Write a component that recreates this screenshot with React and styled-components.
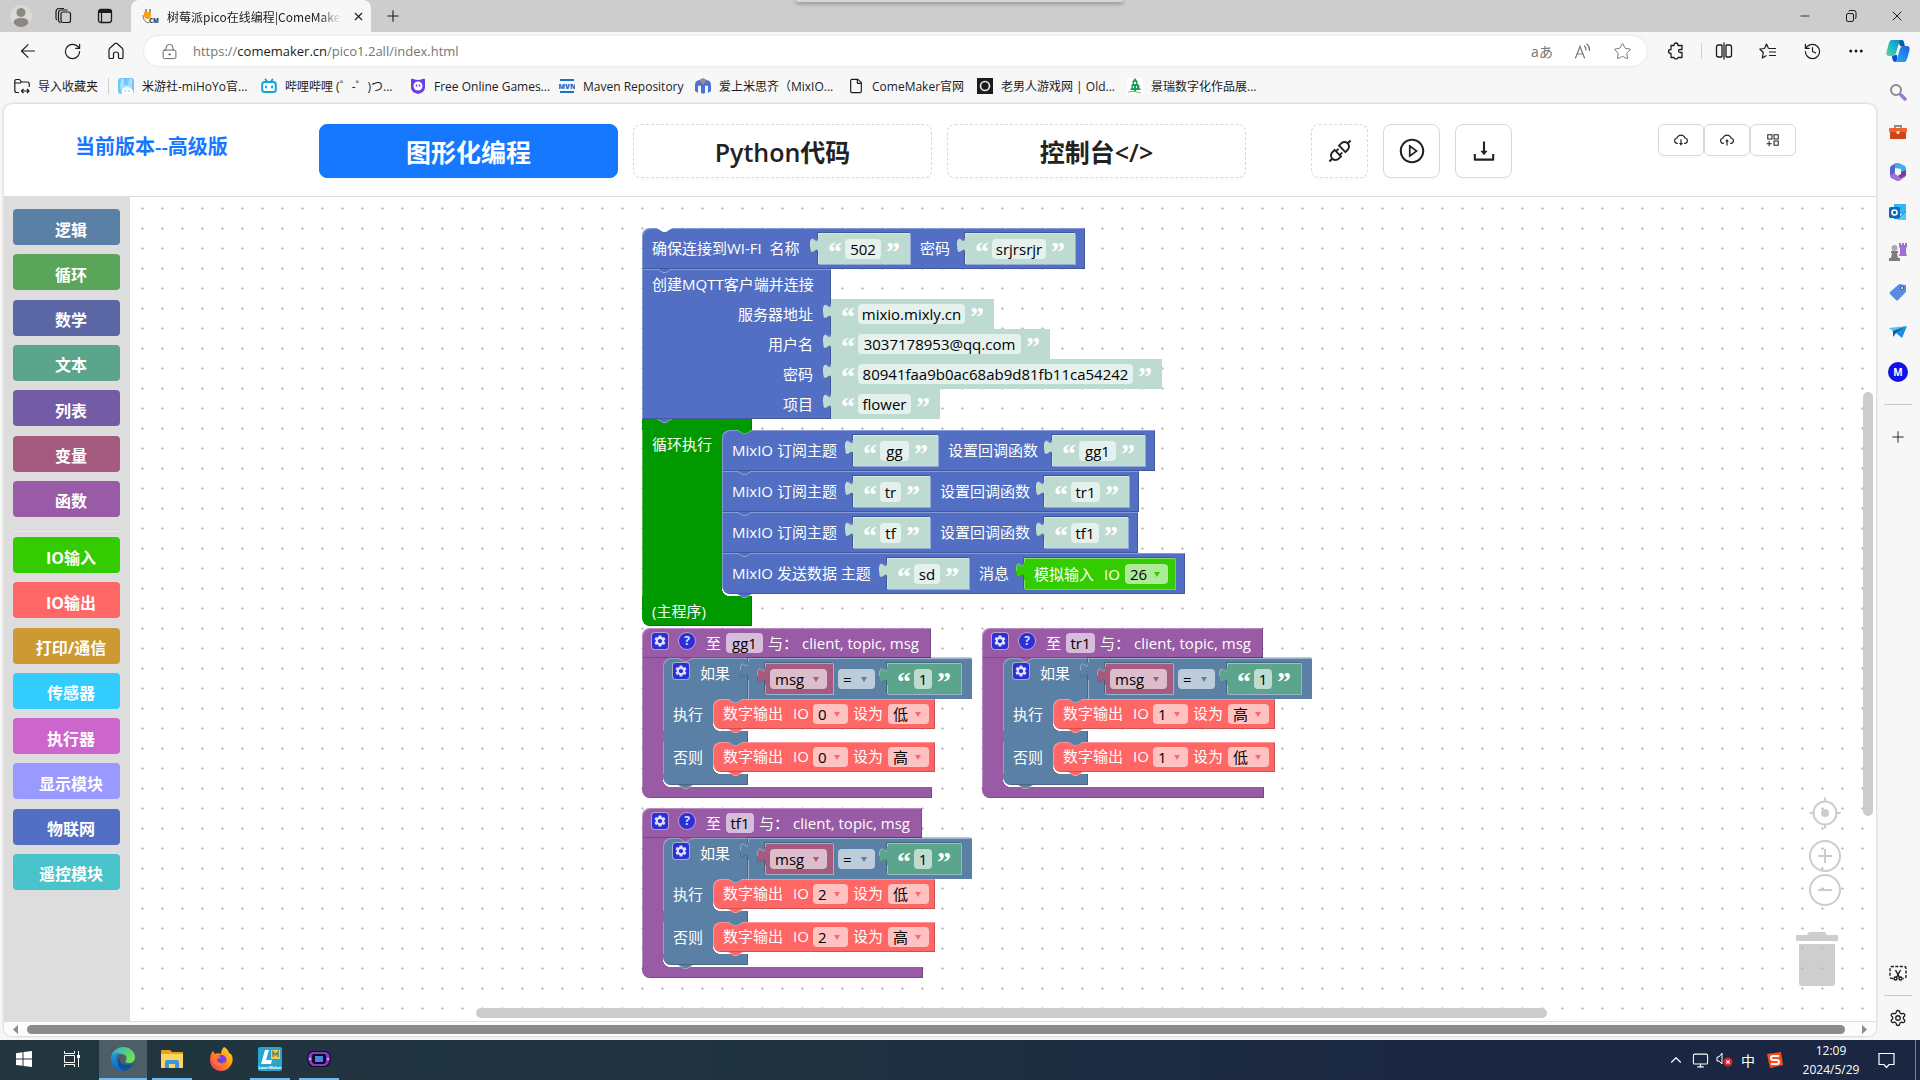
import React, { useState } from 'react';
import styled, { createGlobalStyle, css } from 'styled-components';
import {
    ArrowLeft, RotateCw, LockKeyhole, Star, History, Ellipsis, X, Plus, Minus,
    Settings, File, ChevronUp, Monitor
} from 'lucide-react';
import {
    AiOutlineApi, AiOutlinePlayCircle, AiOutlineDownload, AiOutlineCloudDownload,
    AiOutlineCloudUpload, AiOutlineAppstoreAdd
} from 'react-icons/ai';
import { MdSettings } from 'react-icons/md';

const BLUE = '#526fc3';
const GREEN = '#009900';
const PURPLE = '#995ba5';
const LOGIC = '#5b80a5';
const RED = '#ff6666';
const MINT = '#bedbd1';
const TEXT = '#5ba58c';
const VARIABLE = '#a55b80';

const GlobalStyle = createGlobalStyle`
    * {
        box-sizing: border-box;
    }
    body {
        margin: 0;
        background: #f7f7f7;
        font-family: "Open Sans", "Noto Sans CJK SC", sans-serif;
        color: #1b1b1b;
    }
    button, input, select {
        font-family: inherit;
    }
    svg {
        display: block;
        flex: none;
    }
`

const Shell = styled.div`
    display: flex;
    flex-direction: column;
    min-height: 100vh;
    overflow: hidden;
`

/* ---------- browser ---------- */

const TabStrip = styled.div`
    position: relative;
    display: flex;
    align-items: center;
    height: 32px;
    background: #cdcdcd;
`
const IconButton = styled.button`
    display: flex;
    align-items: center;
    justify-content: center;
    flex: none;
    width: ${props => props.$w || 44}px;
    height: ${props => props.$h || 32}px;
    padding: 0;
    border: 0;
    background: none;
    font-size: 14px;
    color: ${props => props.$color || '#1b1b1b'};
`
const BrowserTab = styled.div`
    display: flex;
    align-items: center;
    gap: 8px;
    width: 240px;
    height: 32px;
    margin-left: 5px;
    padding: 0 4px 0 11px;
    border-radius: 8px 8px 0 0;
    background: #f7f7f7;
    font-family: "Noto Sans CJK SC", sans-serif;
    font-size: 12px;
`
const TabTitle = styled.span`
    flex: 1;
    min-width: 0;
    white-space: nowrap;
    -webkit-mask-image: linear-gradient(90deg, #000 88%, transparent);
    mask-image: linear-gradient(90deg, #000 88%, transparent);
`
const WindowButtons = styled.div`
    display: flex;
    margin-left: auto;
`
const SharePill = styled.div`
    position: absolute;
    top: 0;
    left: 796px;
    width: 327px;
    height: 2px;
    border-radius: 0 0 4px 4px;
    background: #d5d8d5;
    box-shadow: 0 1px 4px rgba(0, 0, 0, 0.6);
`
const Middle = styled.div`
    display: flex;
    flex: 1;
`
const Main = styled.main`
    display: flex;
    flex-direction: column;
    flex: 1;
    min-width: 0;
`
const Toolbar = styled.div`
    display: flex;
    align-items: center;
    height: 38px;
    margin-right: -2px;
    padding-left: 6px;
`
const AddressBar = styled.label`
    display: flex;
    align-items: center;
    flex: 1;
    height: 30px;
    margin: 0 4px 0 6px;
    padding: 0 5px 0 17px;
    border-radius: 15px;
    background: #fff;
    box-shadow: 0 0 3px rgba(0, 0, 0, 0.12);
`
const Url = styled.a`
    flex: 1;
    margin-left: 15px;
    font-size: 13px;
    color: #767676;
    text-decoration: none;
    b {
        font-weight: 400;
        color: #1b1b1b;
    }
`
const VLine = styled.span`
    width: 1px;
    height: 16px;
    background: #cfcfcf;
`
const Bookmarks = styled.nav`
    display: flex;
    align-items: center;
    height: 34px;
    padding: 0 0 2px 14px;
`
const Bookmark = styled.a`
    display: flex;
    align-items: center;
    gap: 8px;
    flex: none;
    width: ${props => props.$w}px;
    font-size: 12px;
    white-space: nowrap;
    color: #1b1b1b;
    text-decoration: none;
`
const Rail = styled.aside`
    display: flex;
    flex-direction: column;
    align-items: center;
    width: 44px;
    padding-bottom: 2px;
`
const RailGroup = styled.div`
    margin-top: ${props => props.$end ? 'auto' : '2px'};
`
const RailLine = styled.hr`
    width: 28px;
    height: 1px;
    margin: ${props => props.$gap || 2}px auto;
    border: 0;
    background: #c8c8c8;
`

/* ---------- page ---------- */

const Card = styled.div`
    display: flex;
    flex-direction: column;
    flex: 1;
    margin: 0 0 4px 4px;
    border-radius: 8px;
    background: #fff;
    overflow: hidden;
    box-shadow: 0 0 3px rgba(0, 0, 0, 0.25);
`
const Header = styled.header`
    display: flex;
    align-items: flex-start;
    height: 93px;
    padding: 20px 80px 0 71px;
    border-bottom: 1px solid #ddd;
`
const Version = styled.div`
    width: 244px;
    font-size: 20px;
    font-weight: 600;
    line-height: 46px;
    color: #1677ff;
`
const ModeTabs = styled.div`
    display: flex;
    gap: 15px;
`
const ModeTab = styled.button`
    width: 299px;
    height: 54px;
    padding: 0;
    border: 1px dashed #d9d9d9;
    border-radius: 8px;
    background: #fff;
    font-size: 25px;
    font-weight: 600;
    color: #222;
    box-shadow: 0 2px 0 rgba(0, 0, 0, 0.02);
    ${props => props.$active && css`
        border: 1px solid #1677ff;
        background: #1677ff;
        color: #fff;
    `}
`
const Actions = styled.div`
    display: flex;
    gap: 15px;
    margin-left: 65px;
`
const ActionButton = styled.button`
    display: flex;
    align-items: center;
    justify-content: center;
    width: ${props => props.$small ? 46 : 57}px;
    height: ${props => props.$small ? 32 : 54}px;
    padding: 0;
    border: 1px ${props => props.$dashed ? 'dashed' : 'solid'} #d9d9d9;
    border-radius: ${props => props.$small ? 6 : 8}px;
    background: #fff;
    color: #222;
    font-size: ${props => props.$small ? 16 : 28}px;
    box-shadow: 0 2px 0 rgba(0, 0, 0, 0.02);
`
const FileActions = styled.div`
    display: flex;
    margin-left: auto;
`
const Editor = styled.div`
    display: flex;
    flex: 1;
`
const Toolbox = styled.nav`
    width: 126px;
    padding: 12px 10px 0 9px;
    background: #ddd;
`
const ToolboxGroup = styled.div`
    display: flex;
    flex-direction: column;
    justify-content: space-between;
    height: ${props => props.$h}px;
`
const ToolboxLine = styled.hr`
    height: 1px;
    margin: 14px 0 5px;
    border: 0;
    background: #e8e8e8;
`
const Category = styled.button`
    height: 36px;
    padding: 5px 0 0 9px;
    border: 0;
    border-radius: 4px;
    background: ${props => props.$color};
    font-size: 16px;
    font-weight: 700;
    line-height: 30px;
    color: #fff;
`
const Canvas = styled.section`
    position: relative;
    flex: 1;
    overflow: hidden;
`
const Dots = styled.svg`
    position: absolute;
    inset: 0;
    width: 100%;
    height: 100%;
`
const CanvasTools = styled.div`
    position: absolute;
    right: 35px;
    bottom: 35px;
    display: flex;
    flex-direction: column;
    align-items: center;
`
const CanvasTool = styled.button`
    padding: 0;
    border: 0;
    background: none;
    margin: 0 0 ${props => props.$gap || 0}px ${props => props.$left || 0}px;
`
const ScrollThumb = styled.div`
    position: absolute;
    border-radius: 5px;
    background: #ccc;
    ${props => props.$vertical
        ? css`top: 195px; right: 3px; width: 10px; height: 424px;`
        : css`left: 346px; right: 329px; bottom: 3px; height: 10px;`}
`
const PageScroll = styled.div`
    display: flex;
    align-items: center;
    gap: 9px;
    height: 15px;
    padding: 0 9px;
    border-top: 1px solid #ddd;
    background: #fcfcfc;
`
const PageThumb = styled.div`
    flex: 1;
    height: 9px;
    margin-right: 8px;
    border-radius: 5px;
    background: #8b8b8b;
`

/* ---------- blocks ---------- */

const bevel = 'box-shadow: inset 1px 1px 0 rgba(255, 255, 255, 0.3), inset -1px -1px 0 rgba(0, 0, 0, 0.2);'

const Stack = styled.div`
    position: absolute;
    left: ${props => props.$x}px;
    top: ${props => props.$y}px;
    display: flex;
    flex-direction: column;
    align-items: flex-start;
    font-size: 15px;
    white-space: nowrap;
    color: #fff;
`
const Label = styled.span`
    flex: none;
    width: ${props => props.$w}px;
    line-height: 20px;
    text-align: ${props => props.$right ? 'right' : 'left'};
`
const StatementBox = styled.div`
    position: relative;
    display: flex;
    align-items: center;
    gap: ${props => props.$gap || 10}px;
    width: max-content;
    height: ${props => props.$h || 41}px;
    padding: 0 ${props => props.$right || 10}px 0 10px;
    border-radius: ${props => props.$first ? 8 : 0}px 0 0 ${props => props.$last ? 8 : 0}px;
    background: ${props => props.$color};
    ${bevel}
    & > ${Label} {
        padding-bottom: 2px;
    }
`
const NotchSvg = styled.svg`
    position: absolute;
    left: 15px;
    ${props => props.$below ? 'top: 100%;' : 'top: 0;'}
    z-index: 1;
`
const ValueBox = styled.div`
    position: relative;
    display: flex;
    align-items: center;
    flex: none;
    height: ${props => props.$h || 31}px;
    padding: ${props => props.$pad || '0 12px 0 10px'};
    background: ${props => props.$color};
    ${props => !props.$flat && css`
        box-shadow: inset 1px 1px 0 rgba(255, 255, 255, 0.4), -1px -1px 0 rgba(0, 0, 0, 0.22), 1px 1px 0 rgba(255, 255, 255, 0.4);
    `}
`
const TabSvg = styled.svg`
    position: absolute;
    left: -8px;
    top: 4px;
`
const Quote = styled.span`
    width: 12px;
    height: 22px;
    margin: ${props => props.$end ? '0 0 0 5px' : '0 5px 0 0'};
    font-family: "Liberation Serif", serif;
    font-size: 28px;
    font-weight: 700;
    line-height: 27px;
    color: #fff;
`
const TextField = styled.input`
    width: ${props => props.$w}px;
    height: 20px;
    padding: 0;
    border: 0;
    border-radius: 4px;
    background: rgba(255, 255, 255, 0.6);
    font-size: 15px;
    line-height: 20px;
    text-align: center;
    color: #000;
`
const SelectWrap = styled.span`
    position: relative;
    flex: none;
    width: ${props => props.$w}px;
    height: 20px;
    border-radius: 4px;
    background: rgba(255, 255, 255, 0.6);
    &::after {
        content: '';
        position: absolute;
        right: 8px;
        top: 8px;
        border: 3px solid transparent;
        border-top: 5px solid ${props => props.$color};
        border-bottom: 0;
        pointer-events: none;
    }
`
const Select = styled.select`
    width: 100%;
    height: 20px;
    padding: 0 0 0 5px;
    border: 0;
    appearance: none;
    background: none;
    font-size: 15px;
    line-height: 20px;
    color: #000;
`
const Arm = styled.div`
    position: relative;
    width: ${props => props.$w}px;
    height: ${props => props.$h || 11}px;
    padding-left: 10px;
    line-height: 31px;
    background: ${props => props.$color};
    border-radius: 0 0 0 ${props => props.$last ? 8 : 0}px;
    box-shadow: inset -1px ${props => props.$last ? '-1px' : 0} 0 rgba(0, 0, 0, 0.2);
`
const Body = styled.div`
    display: flex;
`
const Spine = styled.div`
    width: ${props => props.$w}px;
    padding-left: 10px;
    line-height: ${props => props.$line || 30}px;
    background: ${props => props.$color};
    box-shadow: inset 1px 0 0 rgba(255, 255, 255, 0.3);
`
const Nest = styled.div`
    position: relative;
    padding-bottom: 2px;
    &::before, &::after {
        content: '';
        position: absolute;
        left: 0;
        width: 8px;
        height: 8px;
    }
    &::before {
        top: 0;
        background: ${props => props.$color};
    }
    &::after {
        bottom: 0;
        background: radial-gradient(circle at 100% 0, #fff 8px, ${props => props.$color} 8px);
    }
    & > * {
        z-index: 1;
    }
`
const Column = styled.div`
    position: relative;
`
const ConnectBlock = styled.div`
    position: relative;
    width: 189px;
    padding-left: 10px;
    background: ${BLUE};
    ${bevel}
`
const ConnectTitle = styled.div`
    height: 30px;
    line-height: 31px;
`
const ConnectRow = styled.div`
    display: flex;
    align-items: center;
    gap: 18px;
    width: max-content;
`
const IfHead = styled.div`
    position: relative;
    display: flex;
    width: 85px;
    height: 41px;
    padding: 5px 0 0 10px;
    gap: 11px;
    line-height: 21px;
    border-radius: 8px 0 0 0;
    background: ${LOGIC};
    box-shadow: inset 1px 1px 0 rgba(255, 255, 255, 0.3);
`
const BlockIcon = styled.span`
    display: flex;
    align-items: center;
    justify-content: center;
    flex: none;
    width: 16px;
    height: 16px;
    border-radius: ${props => props.$round ? 8 : 3}px;
    background: #2a2fd8;
    box-shadow: 0 0 0 1px rgba(255, 255, 255, 0.4);
    font-size: 12px;
    font-weight: 700;
    line-height: 16px;
    color: #e0e0ff;
`
const DefHead = styled.div`
    position: relative;
    display: flex;
    align-items: center;
    gap: 5px;
    width: max-content;
    height: 30px;
    padding: 0 12px 0 10px;
    border-radius: 8px 0 0 0;
    background: ${PURPLE};
    ${bevel}
`
const DefIcons = styled.span`
    display: flex;
    gap: 11px;
    margin: 0 6px 5px 0;
`

/* ---------- taskbar ---------- */

const Taskbar = styled.footer`
    display: flex;
    height: 40px;
    background: linear-gradient(90deg, #22363f 0%, #20333f 35%, #1b2742 75%, #1b2742 100%);
    color: #fff;
`
const TaskButton = styled.button`
    display: flex;
    align-items: center;
    justify-content: center;
    width: ${props => props.$w || 40}px;
    margin-right: ${props => props.$gap || 0}px;
    padding: 0;
    border: 0;
    border-bottom: 2px solid ${props => props.$open ? '#76b9ed' : 'transparent'};
    background: ${props => props.$active ? '#4c5e66' : 'none'};
    background-clip: padding-box;
    color: #fff;
`
const Tray = styled.div`
    display: flex;
    align-items: center;
    margin-left: auto;
`
const TrayItem = styled.span`
    display: flex;
    align-items: center;
    justify-content: center;
    width: ${props => props.$w || 24}px;
    font-size: 14px;
`
const Clock = styled.time`
    width: 82px;
    font-size: 12px;
    line-height: 19px;
    text-align: center;
`
const ShowDesktop = styled.span`
    width: 5px;
    height: 40px;
    margin-left: 15px;
    border-left: 1px solid #7a8292;
`

function Notch({ color, below }) {
    return (
        <NotchSvg $below={below} width="15" height="4" viewBox="0 0 15 4">
            <path d="M0 0 L6 4 H9 L15 0 Z" fill={color} />
            <path d="M0 0 L6 3.5 H9 L15 0" fill="none" stroke="rgba(255,255,255,.35)" />
        </NotchSvg>
    )
}

function Value({ color, children, ...rest }) {
    return (
        <ValueBox $color={color} {...rest}>
            <TabSvg width="9" height="18" viewBox="0 0 9 18">
                <path d="M9 1 H8 C8 11 0 -7 0 8.500 S8 6 8 16 H9 Z" fill={color} stroke="rgba(0,0,0,.12)" />
                <path d="M8 1 C8 11 0.500 -7 0.500 8.500" fill="none" stroke="rgba(255,255,255,.45)" />
                <rect x="8" y="0" width="1" height="18" fill={color} />
            </TabSvg>
            {children}
        </ValueBox>
    )
}

function TextValue({ text, w, color = MINT, ...rest }) {
    return (
        <Value color={color} {...rest}>
            <Quote>“</Quote>
            <TextField $w={w} defaultValue={text} aria-label={text} />
            <Quote $end>”</Quote>
        </Value>
    )
}

function Dropdown({ value, options, w, color, label }) {
    return (
        <SelectWrap $w={w} $color={color}>
            <Select defaultValue={value} aria-label={label}>
                {(options || [value]).map(option => <option key={option}>{option}</option>)}
            </Select>
        </SelectWrap>
    )
}

function Subscribe({ topic, topicW, handler, handlerW, first }) {
    return (
        <StatementBox $color={BLUE} $first={first}>
            <Notch color={first ? GREEN : BLUE} />
            <Label $w={111}>MixIO 订阅主题</Label>
            <TextValue text={topic} w={topicW} />
            <Label $w={94}>设置回调函数</Label>
            <TextValue text={handler} w={handlerW} />
        </StatementBox>
    )
}

function DigitalWrite({ pin, level }) {
    return (
        <StatementBox $color={RED} $first $last $h={30} $gap={5} $right={6}>
            <Notch color={LOGIC} />
            <Label $w={65}>数字输出</Label>
            <Label $w={15}>IO</Label>
            <Dropdown value={pin} options={['0', '1', '2']} w={35} color={RED} label="IO" />
            <Label $w={30}>设为</Label>
            <Dropdown value={level} options={['高', '低']} w={41} color={RED} label="设为" />
            <Notch color={RED} below />
        </StatementBox>
    )
}

function Callback({ x, y, name, nameW, pin, then, otherwise }) {
    return (
        <Stack $x={x} $y={y}>
            <DefHead>
                <DefIcons>
                    <BlockIcon><MdSettings size={14} /></BlockIcon>
                    <BlockIcon $round>?</BlockIcon>
                </DefIcons>
                <Label $w={15}>至</Label>
                <TextField $w={nameW} defaultValue={name} aria-label="至" />
                <Label $w={29}>与：</Label>
                <Label $w={117}>client, topic, msg</Label>
            </DefHead>
            <Body>
                <Spine $w={21} $color={PURPLE} />
                <Nest $color={PURPLE}>
                    <Column>
                        <Notch color={PURPLE} />
                        <Body>
                            <IfHead>
                                <BlockIcon><MdSettings size={14} /></BlockIcon>
                                <Label $w={30}>如果</Label>
                            </IfHead>
                            <Value color={LOGIC} $h={41} $pad="0 11px 0 17px">
                                <Value color={VARIABLE} $pad="0 6px 0 5px">
                                    <Dropdown value="msg" w={57} color={VARIABLE} label="msg" />
                                </Value>
                                <ValueBox $flat $color="none" $pad="0 12px 0 5px">
                                    <Dropdown value="=" w={37} color={LOGIC} label="=" />
                                </ValueBox>
                                <TextValue text="1" w={18} color={TEXT} />
                            </Value>
                        </Body>
                        <Body>
                            <Spine $w={50} $color={LOGIC}>执行</Spine>
                            <Nest $color={LOGIC}><DigitalWrite pin={pin} level={then} /></Nest>
                        </Body>
                        <Arm $w={85} $color={LOGIC} />
                        <Body>
                            <Spine $w={50} $color={LOGIC}>否则</Spine>
                            <Nest $color={LOGIC}><DigitalWrite pin={pin} level={otherwise} /></Nest>
                        </Body>
                        <Arm $w={85} $color={LOGIC} $last><Notch color={LOGIC} below /></Arm>
                    </Column>
                </Nest>
            </Body>
            <Arm $w={253 + nameW} $color={PURPLE} $last />
        </Stack>
    )
}

function MainProgram() {
    return (
        <Stack $x={512} $y={31}>
            <StatementBox $color={BLUE} $first>
                <Notch color="#fff" />
                <Label $w={156}>确保连接到WI-FI&nbsp; 名称</Label>
                <TextValue text="502" w={36} />
                <Label $w={35}>密码</Label>
                <TextValue text="srjrsrjr" w={54} />
            </StatementBox>
            <ConnectBlock>
                <Notch color={BLUE} />
                <ConnectTitle>创建MQTT客户端并连接</ConnectTitle>
                <ConnectRow><Label $w={161} $right>服务器地址</Label><TextValue $flat $h={30} text="mixio.mixly.cn" w={107} /></ConnectRow>
                <ConnectRow><Label $w={161} $right>用户名</Label><TextValue $flat $h={30} text="3037178953@qq.com" w={163} /></ConnectRow>
                <ConnectRow><Label $w={161} $right>密码</Label><TextValue $flat $h={30} text="80941faa9b0ac68ab9d81fb11ca54242" w={275} /></ConnectRow>
                <ConnectRow><Label $w={161} $right>项目</Label><TextValue $flat $h={30} text="flower" w={53} /></ConnectRow>
            </ConnectBlock>
            <Arm $w={110} $color={GREEN}><Notch color={BLUE} /></Arm>
            <Body>
                <Spine $w={80} $line={28} $color={GREEN}>循环执行</Spine>
                <Nest $color={GREEN}>
                    <Subscribe first topic="gg" topicW={29} handler="gg1" handlerW={37} />
                    <Subscribe topic="tr" topicW={21} handler="tr1" handlerW={29} />
                    <Subscribe topic="tf" topicW={21} handler="tf1" handlerW={28} />
                    <StatementBox $color={BLUE} $last>
                        <Notch color={BLUE} />
                        <Label $w={145}>MixIO 发送数据 主题</Label>
                        <TextValue text="sd" w={26} />
                        <Label $w={35}>消息</Label>
                        <Value color="#33cc00" $pad="0 7px 0 10px">
                            <Label $w={70}>模拟输入</Label>
                            <Label $w={21}>IO</Label>
                            <Dropdown value="26" w={43} color="#33cc00" label="IO" />
                        </Value>
                        <Notch color={BLUE} below />
                    </StatementBox>
                </Nest>
            </Body>
            <Arm $w={110} $h={30} $color={GREEN} $last>(主程序)</Arm>
        </Stack>
    )
}

const basics = [
    ['逻辑', LOGIC], ['循环', '#5ba55b'], ['数学', '#5b67a5'], ['文本', TEXT],
    ['列表', '#745ba5'], ['变量', VARIABLE], ['函数', PURPLE]
]
const hardware = [
    ['IO输入', '#33cc00'], ['IO输出', RED], ['打印/通信', '#cc9933'], ['传感器', '#33ccff'],
    ['执行器', '#cc66cc'], ['显示模块', '#9999ff'], ['物联网', BLUE], ['遥控模块', '#49c4ca']
]

const bookmarks = [
    { text: '米游社-miHoYo官...', w: 143, icon: <MiyousheIcon /> },
    { text: '哔哩哔哩 (゜-゜)つ...', w: 149, icon: <BiliIcon /> },
    { text: 'Free Online Games...', w: 149, icon: <PokiIcon /> },
    { text: 'Maven Repository', w: 136, icon: <MvnIcon /> },
    { text: '爱上米思齐（MixIO...', w: 153, icon: <MixIcon /> },
    { text: 'ComeMaker官网', w: 129, icon: <File size={16} strokeWidth={1.75} /> },
    { text: '老男人游戏网 | Old...', w: 150, icon: <OldManIcon /> },
    { text: '景瑞数字化作品展...', w: 140, icon: <TreeIcon /> }
]

function MiyousheIcon() {
    return (
        <svg width="16" height="16" viewBox="0 0 16 16">
            <rect width="16" height="16" rx="3" fill="#6fc6fb" />
            <path d="M3 1h3v6h4l1-6h3v8l-2 7H4L2 9z" fill="#a8dffc" />
            <path d="M4 16c-1-4 1-7 5-7s7 3 6 7z" fill="#fff" />
            <path d="M7 12v2M11 12v2" stroke="#6fc6fb" />
        </svg>
    )
}
function BiliIcon() {
    return (
        <svg width="16" height="16" viewBox="0 0 16 16" fill="none" stroke="#12a5da" strokeWidth="2" strokeLinecap="round">
            <path d="M4.500 1.500 6 3.500M11.500 1.500 10 3.500" />
            <rect x="1.200" y="4" width="13.600" height="10" rx="2.500" fill="#fff" />
            <path d="M5 8.500v1M11 8.500v1" />
        </svg>
    )
}
function PokiIcon() {
    return (
        <svg width="16" height="16" viewBox="0 0 16 16">
            <path d="M1 1c3-1 3 1 7 1s4-2 7-1v8c0 4-3 6-7 7-4-1-7-3-7-7z" fill="#6a3de8" />
            <circle cx="8" cy="8" r="4.500" fill="#fff" />
            <path d="M6.500 6.500v2M9.500 6.500v2" stroke="#6a3de8" strokeWidth="1.500" />
        </svg>
    )
}
function MvnIcon() {
    return (
        <svg width="16" height="16" viewBox="0 0 16 16">
            <path d="M1 1h14v2H1zM1 13h14v2H1z" fill="#1f6fc9" />
            <text x="8" y="11" textAnchor="middle" fontFamily="Open Sans, sans-serif" fontWeight="800" fontSize="7" fill="#1f6fc9">MVN</text>
        </svg>
    )
}
function MixIcon() {
    return (
        <svg width="16" height="16" viewBox="0 0 16 16">
            <path d="M0 7q0-4 4-5h8q4 1 4 5v6l-3 2V8q-2-1-3 0v7q-2 1-4 0V8Q5 7 3 8v7l-3-2z" fill="#4a72d9" />
            <path d="M4 2l4-2 4 2-4 5z" fill="#a18b84" />
        </svg>
    )
}
function OldManIcon() {
    return (
        <svg width="16" height="16" viewBox="0 0 16 16">
            <rect width="16" height="16" fill="#1b1b1b" />
            <circle cx="8" cy="8" r="4.500" fill="none" stroke="#e5e5e5" strokeWidth="1.700" />
        </svg>
    )
}
function TreeIcon() {
    return (
        <svg width="16" height="16" viewBox="0 0 16 16">
            <rect width="16" height="16" fill="#fff" />
            <path d="M8 0l3 4-1 1 3 3-1 1 2 3H9v2H7v-2H3l2-3-1-1 2-3-1-1z" fill="#1e9e54" />
            <path d="M7 4h2v2H7zM6 8h1v2H6zM9 8h1v2H9z" fill="#fff" />
            <path d="M1 14q6-2 13 1" stroke="#8ab06c" fill="none" />
        </svg>
    )
}
function CopilotIcon() {
    return (
        <svg width="24" height="24" viewBox="0 0 24 24">
            <defs>
                <linearGradient id="cpA" x1="0" y1="1" x2="1" y2="0">
                    <stop offset="0" stopColor="#5fdc8f" />
                    <stop offset=".5" stopColor="#1fb5c9" />
                    <stop offset="1" stopColor="#0a84d8" />
                </linearGradient>
                <linearGradient id="cpB" x1="0" y1="1" x2="1" y2="0">
                    <stop offset="0" stopColor="#23b3f3" />
                    <stop offset="1" stopColor="#1c5fe0" />
                </linearGradient>
            </defs>
            <path d="M12 1h4c2 0 2 3 3 6h-5z" fill="#0a5a9c" />
            <path d="M6 16h5l1 7H9c-2 0-3-3-3-7z" fill="#1943d8" />
            <path d="M6 1h9c-3 1-4 15-7 16H3c-3 0-3-3-2-6L3 4c1-2 1-3 3-3z" fill="url(#cpA)" />
            <path d="M18 23H9c3-1 4-15 7-16h5c3 0 3 3 2 6l-2 7c-1 2-1 3-3 3z" fill="url(#cpB)" />
        </svg>
    )
}
function MagnifierIcon() {
    return (
        <svg width="18" height="18" viewBox="0 0 18 18" fill="none">
            <circle cx="7" cy="7" r="5" stroke="#8b8b8b" strokeWidth="2" />
            <path d="M12 12l4 4" stroke="#a173d9" strokeWidth="3.500" strokeLinecap="round" />
        </svg>
    )
}
function ToolboxIcon() {
    return (
        <svg width="18" height="16" viewBox="0 0 18 16">
            <path d="M6 4V2h6v2" fill="none" stroke="#8c8c8c" strokeWidth="1.800" />
            <rect y="4" width="18" height="4.500" rx="1" fill="#f0642b" />
            <rect x="1" y="8" width="16" height="7" rx="1" fill="#cf4517" />
            <rect x="7.500" y="7" width="3" height="3" rx="1" fill="#ddd" />
        </svg>
    )
}
function OfficeIcon() {
    return (
        <svg width="18" height="18" viewBox="0 0 18 18">
            <path d="M9 0L6 2v7l-1 4-3 1-1-2V5q0-1 1-2l5-3z" fill="#5a63cf" />
            <path d="M8 0h2l6 3q1 1 1 2v6l-5-2V6L6 5V2z" fill="#3fb1ea" />
            <path d="M1 12l5-2 3 3 8-3v2q0 1-1 2l-6 4H8l-6-3q-1-1-1-3z" fill="#a46fd8" />
            <path d="M12 9l5-2v5l-5 3-3-2z" fill="#7a3f9e" />
            <path d="M9 5.500l3 1.500v4l-3 1.500L6 11V7z" fill="#f7f7f7" />
        </svg>
    )
}
function OutlookIcon() {
    return (
        <svg width="18" height="18" viewBox="0 0 18 18">
            <rect x="5" y="1" width="12" height="10" fill="#32b5f0" />
            <path d="M3 9l8 4 6-5v8H5z" fill="#1a8be0" />
            <path d="M17 9v8H8z" fill="#4ccaf7" />
            <rect x="0" y="4" width="11" height="11" rx="1.500" fill="#0a68bd" />
            <circle cx="5.500" cy="9.500" r="2.500" fill="none" stroke="#fff" strokeWidth="1.600" />
        </svg>
    )
}
function ChessIcon() {
    return (
        <svg width="18" height="19" viewBox="0 0 18 19">
            <path d="M10 0h2v2h1V0h2v2h1V0h2v4l-1 1v5l1 3h-8l1-3V5l-1-1z" fill="#a06fd0" />
            <circle cx="5.500" cy="5" r="3" fill="#aaa" />
            <path d="M2 8h7v2H8l1 5h2v3H0v-3h2l1-5H2z" fill="#7d7d7d" />
        </svg>
    )
}
function TagIcon() {
    return (
        <svg width="18" height="18" viewBox="0 0 18 18">
            <path d="M9 2q1-1 2-1l5 1q1 0 1 1v5q0 1-1 2l-7 7q-1 1-2 0L1 11q-1-1 0-2z" fill="#5b8be0" />
            <circle cx="13" cy="5" r="1.600" fill="#dce8fb" stroke="#2d57a8" />
        </svg>
    )
}
function PlaneIcon() {
    return (
        <svg width="18" height="14" viewBox="0 0 18 14">
            <path d="M0 3L18 1 5 7z" fill="#3ccaf5" />
            <path d="M18 1L13 13 7 8z" fill="#1b8fdd" />
            <path d="M18 1L4 6v6l3-4z" fill="#0f5ba0" />
        </svg>
    )
}
function LetterM() {
    return (
        <svg width="20" height="20" viewBox="0 0 20 20">
            <circle cx="10" cy="10" r="10" fill="#1111f0" />
            <text x="10" y="14" textAnchor="middle" fontFamily="Open Sans, sans-serif" fontWeight="700" fontSize="10" fill="#fff">M</text>
        </svg>
    )
}
function SiteIcon() {
    return (
        <svg width="17" height="16" viewBox="0 0 17 16">
            <path d="M4 1v3M8 1v3" stroke="#777" strokeWidth="1.500" />
            <path d="M2 4h7v4q-1 3-3.500 3T2 8z" fill="#f5a21b" />
            <path d="M1 7q0 7 6 8" stroke="#777" fill="none" />
            <text x="7" y="15" fontFamily="Open Sans, sans-serif" fontWeight="800" fontSize="6" fill="#444">CM</text>
        </svg>
    )
}
function AvatarIcon() {
    return (
        <svg width="22" height="22" viewBox="0 0 22 22">
            <circle cx="11" cy="11" r="11" fill="#dcdad7" />
            <circle cx="11" cy="7.500" r="4.500" fill="#8b8782" />
            <path d="M3.500 18q0-5 7.500-5t7.500 5q-3 4-7.500 4t-7.500-4z" fill="#8b8782" />
        </svg>
    )
}
function WorkspacesIcon() {
    return (
        <svg width="18" height="18" viewBox="0 0 18 18" fill="none" stroke="#1b1b1b" strokeWidth="1.200" strokeLinejoin="round">
            <rect x="7" y="5" width="9.500" height="10.500" rx="2" />
            <path d="M4.500 13V6q0-3 3-3h6M2 11V5q0-3.500 3.500-3.500H10" />
            <path d="M4.500 13q0 2 2 3M2 11q0 1.500 1 2" />
        </svg>
    )
}
function TabActionsIcon() {
    return (
        <svg width="16" height="16" viewBox="0 0 16 16" fill="none" stroke="#1b1b1b" strokeWidth="1.300">
            <rect x="1.500" y="1.500" width="13" height="13" rx="2.500" />
            <path d="M1.500 3.500h13" strokeWidth="3" />
            <path d="M4.500 5v9.500" strokeWidth="1.200" />
        </svg>
    )
}
function HomeIcon() {
    return (
        <svg width="18" height="18" viewBox="0 0 18 18" fill="none" stroke="#1b1b1b" strokeWidth="1.200" strokeLinejoin="round">
            <path d="M2 8q0-1 1-2l5-4.500q1-.8 2 0L15 6q1 1 1 2v7.500q0 1-1 1h-2.500q-1 0-1-1V12q0-2-2.500-2t-2.500 2v3.500q0 1-1 1H3q-1 0-1-1z" />
        </svg>
    )
}
function RestoreIcon() {
    return (
        <svg width="12" height="12" viewBox="0 0 12 12" fill="none" stroke="#1b1b1b">
            <rect x="1.500" y="3.500" width="7" height="8" rx="1.500" />
            <path d="M3.500 1.500q.5-1 1.500-1h4q2 0 2 2V7q0 1.500-1 2" />
        </svg>
    )
}
function ImportIcon() {
    return (
        <svg width="16" height="16" viewBox="0 0 16 16" fill="none" stroke="#1b1b1b" strokeWidth="1.200" strokeLinejoin="round">
            <path d="M5 14.500H2.500q-1.700 0-1.700-2V3.500q0-2 1.700-2h3L7.500 4h6q1.700 0 1.700 1.500V9M1 5h5l1.500-1" />
            <path d="M7.500 13h7.500M9.500 11l-2 2 2 2M13 11l2 2-2 2" />
        </svg>
    )
}
function ReadAloudIcon() {
    return (
        <svg width="17" height="17" viewBox="0 0 17 17" fill="none" stroke="#767676" strokeWidth="1.200" strokeLinecap="round">
            <path d="M1.500 15 6 3.500 10.500 15M3 11h6" />
            <path d="M10.500 3q1.500 1.500 1.500 4M13 1q2.500 2.500 2.500 6.500" />
        </svg>
    )
}
function ExtensionsIcon() {
    return (
        <svg width="18" height="18" viewBox="0 0 18 18" fill="none" stroke="#1b1b1b" strokeWidth="1.300" strokeLinejoin="round">
            <path d="M4 3.500h3q0-2.500 2-2.500t2 2.500h4v4h-1.500q-2 0-2 1.500t2 1.500H15v5h-4q0 1.500-2 1.500t-2-1.500H4v-4q-2.500 0-2.500-2T4 7.500z" />
        </svg>
    )
}
function SplitIcon() {
    return (
        <svg width="18" height="18" viewBox="0 0 18 18" fill="none" stroke="#1b1b1b" strokeWidth="1.300">
            <path d="M7 3H3.500Q1.500 3 1.500 5v8q0 2 2 2H7M11 3h3.500q2 0 2 2v8q0 2-2 2H11" />
            <path d="M9 .500v17M7 3v12M11 3v12" />
        </svg>
    )
}
function FavoritesIcon() {
    return (
        <svg width="18" height="18" viewBox="0 0 18 18" fill="none" stroke="#1b1b1b" strokeWidth="1.200" strokeLinejoin="round">
            <path d="M9.500 6.500 7.500 2 5.500 6.500.800 7l3.500 3.500-1 5.500 4.200-2.500" />
            <path d="M9.500 6.500H17M10 10h7M10 13.500h7" />
        </svg>
    )
}
function SnipIcon() {
    return (
        <svg width="18" height="16" viewBox="0 0 18 16" fill="none" stroke="#1b1b1b" strokeWidth="1.400">
            <path d="M4 13.500H3q-2 0-2-2v-8q0-2 2-2h12q2 0 2 2v8q0 2-2 2h-1" strokeDasharray="3 1.500" />
            <path d="M6.500 5l4 7.500M11.500 5l-4 7.500" />
            <circle cx="6.500" cy="13.500" r="1.500" />
            <circle cx="11.500" cy="13.500" r="1.500" />
        </svg>
    )
}
function NoticeIcon() {
    return (
        <svg width="17" height="17" viewBox="0 0 17 17" fill="none" stroke="#fff" strokeWidth="1.200">
            <path d="M1 1.500h15v11h-5L8.500 15.500 6 12.500H1z" />
        </svg>
    )
}
function EdgeIcon() {
    return (
        <svg width="24" height="24" viewBox="0 0 24 24">
            <defs>
                <linearGradient id="edgeTop" x1="0" y1="0" x2="1" y2=".4">
                    <stop offset="0" stopColor="#2aa9e0" />
                    <stop offset="1" stopColor="#6be05a" />
                </linearGradient>
                <linearGradient id="edgeLow" x1="0" y1="0" x2="0" y2="1">
                    <stop offset="0" stopColor="#1c9ae6" />
                    <stop offset="1" stopColor="#0f63c4" />
                </linearGradient>
            </defs>
            <path d="M0 11C1 4 6 0 12 0c7 0 12 5 12 10 0 4-3 6-6 6-4 0-4-2-3-3 2-3-1-6-5-6-5 0-9 2-10 4z" fill="url(#edgeTop)" />
            <path d="M0 12c0-5 5-7 9-6-4 2-4 6-3 9 1 4 5 8 8 8.500C6 25 0 19 0 12z" fill="url(#edgeLow)" />
            <path d="M9 10c-2 6 4 10 13 7-2 4-5 6-8 6.500-7-1-9-9-5-13.500z" fill="#0b4f9e" />
        </svg>
    )
}
function FolderIcon() {
    return (
        <svg width="22" height="18" viewBox="0 0 22 18">
            <path d="M0 1q0-1 1-1h8l2 2h10q1 0 1 1v5H0z" fill="#e8a317" />
            <rect y="4" width="22" height="14" fill="#fbd564" />
            <path d="M4 18v-6q0-2 2-2h10q2 0 2 2v6h-4v-4H8v4z" fill="#3b96dd" />
        </svg>
    )
}
function FirefoxIcon() {
    return (
        <svg width="23" height="24" viewBox="0 0 23 24">
            <defs>
                <linearGradient id="fox" x1="1" y1="0" x2="0" y2="1">
                    <stop offset="0" stopColor="#ffe226" />
                    <stop offset=".5" stopColor="#ff8a1c" />
                    <stop offset="1" stopColor="#f5286e" />
                </linearGradient>
            </defs>
            <path d="M14 0c4 2 5 5 5 6l2 1c2 3 2 6 1 9-2 5-6 8-11 8C4 24 0 18 0 13 0 9 1 6 3 4l2 3c2-1 4-1 6 0 0-3 1-5 3-7z" fill="url(#fox)" />
            <circle cx="11.500" cy="13" r="5" fill="#7a3be0" />
            <path d="M3 8c4 1 6 1 8 2-1 2-4 1-4 3 1 4 6 4 9 1-1 6-11 7-13 0z" fill="#ff7a26" />
        </svg>
    )
}
function LaserIcon() {
    return (
        <svg width="24" height="24" viewBox="0 0 24 24">
            <rect width="24" height="24" rx="2" fill="#25a6cf" />
            <path d="M7 3h4L8 13h6l-1 4H3z" fill="#fff" />
            <rect x="13" y="3" width="9" height="9" fill="#f2cb3e" />
            <path d="M15 10V5l2.500 3L20 5v5" fill="none" stroke="#5d7d73" strokeWidth="1.400" />
            <text x="12" y="22" textAnchor="middle" fontFamily="Open Sans, sans-serif" fontWeight="700" fontSize="4" fill="#fff">LaserMaker</text>
        </svg>
    )
}
function ConsoleIcon() {
    return (
        <svg width="24" height="18" viewBox="0 0 24 18">
            <path d="M4 1h16l3 3 1 5-2 6-3 2H5l-3-2-2-6 1-5z" fill="#16081f" />
            <path d="M5 2h14l3 2 1 5-2 5-3 2H6l-3-2-2-5 1-5z" fill="#8a38cf" />
            <path d="M6 4h12l1 2v6l-2 2H7l-2-2V6z" fill="#0c0a18" />
            <rect x="8" y="6" width="8" height="6" fill="#4b82e8" />
            <path d="M2 9h2M20 9h2" stroke="#e6c4ff" strokeWidth="1.500" />
        </svg>
    )
}
function TaskViewIcon() {
    return (
        <svg width="17" height="16" viewBox="0 0 17 16" fill="none" stroke="#fff">
            <path d="M.500 0v2.500h10V0M.500 16v-2.500h10V16M.500 4.500h10v7h-10zM14.500 0v16" />
            <rect x="13" y="4" width="3" height="3" fill="#fff" stroke="none" />
        </svg>
    )
}
function SogouIcon() {
    return (
        <svg width="16" height="16" viewBox="0 0 16 16">
            <path d="M0 2L14 0l2 13-13 3z" fill="#fb4d14" />
            <path d="M12 4H6q-2 0-2 2t2 2h4q2 0 2 2t-2 2H4" fill="none" stroke="#fff" strokeWidth="2" />
        </svg>
    )
}
function SoundIcon() {
    return (
        <svg width="17" height="16" viewBox="0 0 17 16">
            <path d="M1 5h2l3-4v11L3 9H1z" fill="none" stroke="#fff" />
            <circle cx="12" cy="10" r="4.500" fill="#d9232e" />
            <path d="M10.300 8.300l3.400 3.400M13.700 8.300l-3.400 3.400" stroke="#fff" strokeWidth="1.200" />
        </svg>
    )
}

function App() {

    const [mode, setMode] = useState('图形化编程');

    return (
        <Shell>
            <GlobalStyle />
            <TabStrip>
                <IconButton $w={42} aria-label="个人资料"><AvatarIcon /></IconButton>
                <IconButton $w={42} aria-label="工作区"><WorkspacesIcon /></IconButton>
                <IconButton $w={42} aria-label="标签操作"><TabActionsIcon /></IconButton>
                <BrowserTab>
                    <SiteIcon />
                    <TabTitle>树莓派pico在线编程|ComeMaker</TabTitle>
                    <IconButton $w={18} aria-label="关闭标签"><X size={13} strokeWidth={2} /></IconButton>
                </BrowserTab>
                <IconButton aria-label="新标签"><Plus size={18} strokeWidth={1.5} /></IconButton>
                <SharePill />
                <WindowButtons>
                    <IconButton $w={46} aria-label="最小化"><Minus size={14} strokeWidth={1.5} /></IconButton>
                    <IconButton $w={46} aria-label="还原"><RestoreIcon /></IconButton>
                    <IconButton $w={46} aria-label="关闭"><X size={16} strokeWidth={1.5} /></IconButton>
                </WindowButtons>
            </TabStrip>

            <Middle>
                <Main>
                    <Toolbar>
                        <IconButton aria-label="后退"><ArrowLeft size={22} strokeWidth={1.25} /></IconButton>
                        <IconButton aria-label="刷新"><RotateCw size={19} strokeWidth={1.5} /></IconButton>
                        <IconButton aria-label="主页"><HomeIcon /></IconButton>
                        <AddressBar>
                            <LockKeyhole size={17} strokeWidth={1.25} color="#555" />
                            <Url href="#">https://<b>comemaker.cn</b>/pico1.2all/index.html</Url>
                            <IconButton $w={40} $color="#767676" aria-label="翻译">aあ</IconButton>
                            <IconButton $w={40} aria-label="朗读"><ReadAloudIcon /></IconButton>
                            <IconButton $w={40} $color="#767676" aria-label="收藏"><Star size={19} strokeWidth={1.25} /></IconButton>
                        </AddressBar>
                        <IconButton $w={50} aria-label="扩展"><ExtensionsIcon /></IconButton>
                        <VLine />
                        <IconButton aria-label="拆分屏幕"><SplitIcon /></IconButton>
                        <IconButton aria-label="收藏夹"><FavoritesIcon /></IconButton>
                        <IconButton aria-label="历史"><History size={19} strokeWidth={1.5} /></IconButton>
                        <IconButton aria-label="更多"><Ellipsis size={18} strokeWidth={2} /></IconButton>
                    </Toolbar>
                    <Bookmarks>
                        <Bookmark href="#" $w={94}><ImportIcon />导入收藏夹</Bookmark>
                        <VLine />
                        <Bookmark as="span" $w={9} />
                        {bookmarks.map(item => (
                            <Bookmark href="#" key={item.text} $w={item.w}>{item.icon}{item.text}</Bookmark>
                        ))}
                    </Bookmarks>

                    <Card>
                        <Header>
                            <Version>当前版本--高级版</Version>
                            <ModeTabs>
                                {['图形化编程', 'Python代码', '控制台</>'].map(name => (
                                    <ModeTab key={name} $active={mode === name} onClick={() => setMode(name)}>{name}</ModeTab>
                                ))}
                            </ModeTabs>
                            <Actions>
                                <ActionButton $dashed aria-label="连接"><AiOutlineApi /></ActionButton>
                                <ActionButton aria-label="运行"><AiOutlinePlayCircle /></ActionButton>
                                <ActionButton aria-label="下载"><AiOutlineDownload /></ActionButton>
                            </Actions>
                            <FileActions>
                                <ActionButton $small aria-label="打开"><AiOutlineCloudDownload /></ActionButton>
                                <ActionButton $small aria-label="保存"><AiOutlineCloudUpload /></ActionButton>
                                <ActionButton $small aria-label="扩展"><AiOutlineAppstoreAdd /></ActionButton>
                            </FileActions>
                        </Header>
                        <Editor>
                            <Toolbox>
                                <ToolboxGroup $h={308}>
                                    {basics.map(([name, color]) => <Category key={name} $color={color}>{name}</Category>)}
                                </ToolboxGroup>
                                <ToolboxLine />
                                <ToolboxGroup $h={353}>
                                    {hardware.map(([name, color]) => <Category key={name} $color={color}>{name}</Category>)}
                                </ToolboxGroup>
                            </Toolbox>
                            <Canvas>
                                <Dots>
                                    <defs>
                                        <pattern id="grid" width="20" height="20" patternUnits="userSpaceOnUse">
                                            <path d="M11 11.500h3M12.500 10v3" stroke="#c4c4c4" />
                                        </pattern>
                                    </defs>
                                    <rect width="100%" height="100%" fill="url(#grid)" />
                                </Dots>
                                <MainProgram />
                                <Callback x={512} y={431} name="gg1" nameW={37} pin="0" then="低" otherwise="高" />
                                <Callback x={852} y={431} name="tr1" nameW={29} pin="1" then="高" otherwise="低" />
                                <Callback x={512} y={611} name="tf1" nameW={28} pin="2" then="低" otherwise="高" />
                                <CanvasTools>
                                    <CanvasTool $gap={11} $left={16} aria-label="居中">
                                        <svg width="32" height="32" viewBox="0 0 32 32" fill="none" stroke="#ccc" strokeWidth="2">
                                            <circle cx="16" cy="16" r="11.500" />
                                            <circle cx="16" cy="16" r="4" fill="#ccc" stroke="none" />
                                            <path d="M16 .500v4M16 27.500v4M.500 16h4M27.500 16h4" />
                                        </svg>
                                    </CanvasTool>
                                    <CanvasTool $gap={2} $left={16} aria-label="放大">
                                        <svg width="32" height="32" viewBox="0 0 32 32" fill="none" stroke="#ccc" strokeWidth="2">
                                            <circle cx="16" cy="16" r="15" />
                                            <path d="M9 16h14M16 9v14" />
                                        </svg>
                                    </CanvasTool>
                                    <CanvasTool $gap={26} $left={16} aria-label="缩小">
                                        <svg width="32" height="32" viewBox="0 0 32 32" fill="none" stroke="#ccc" strokeWidth="2">
                                            <circle cx="16" cy="16" r="15" />
                                            <path d="M9 16h14" />
                                        </svg>
                                    </CanvasTool>
                                    <CanvasTool aria-label="回收站">
                                        <svg width="42" height="54" viewBox="0 0 42 54" fill="#bbb" fillOpacity=".72">
                                            <path d="M0 3h11l2-3h16l2 3h11v6H0z" />
                                            <path d="M3 12h36v39q0 3-3 3H6q-3 0-3-3z" />
                                        </svg>
                                    </CanvasTool>
                                </CanvasTools>
                                <ScrollThumb $vertical />
                                <ScrollThumb />
                            </Canvas>
                        </Editor>
                        <PageScroll>
                            <svg width="5" height="9" viewBox="0 0 5 9"><path d="M5 0v9L0 4.500z" fill="#8b8b8b" /></svg>
                            <PageThumb />
                            <svg width="5" height="9" viewBox="0 0 5 9"><path d="M0 0v9l5-4.500z" fill="#8b8b8b" /></svg>
                        </PageScroll>
                    </Card>
                </Main>

                <Rail>
                    <IconButton $h={38} aria-label="Copilot"><CopilotIcon /></IconButton>
                    <RailGroup>
                        <IconButton $h={40} aria-label="搜索"><MagnifierIcon /></IconButton>
                        <IconButton $h={40} aria-label="工具"><ToolboxIcon /></IconButton>
                        <IconButton $h={40} aria-label="Microsoft 365"><OfficeIcon /></IconButton>
                        <IconButton $h={40} aria-label="Outlook"><OutlookIcon /></IconButton>
                        <IconButton $h={40} aria-label="游戏"><ChessIcon /></IconButton>
                        <IconButton $h={40} aria-label="购物"><TagIcon /></IconButton>
                        <IconButton $h={40} aria-label="Drop"><PlaneIcon /></IconButton>
                        <IconButton $h={40} aria-label="M"><LetterM /></IconButton>
                        <RailLine $gap={12} />
                        <IconButton $h={40} aria-label="自定义"><Plus size={18} strokeWidth={1.25} /></IconButton>
                    </RailGroup>
                    <RailGroup $end>
                        <IconButton $h={40} aria-label="截图"><SnipIcon /></IconButton>
                        <RailLine />
                        <IconButton $h={40} aria-label="设置"><Settings size={18} strokeWidth={1.75} /></IconButton>
                    </RailGroup>
                </Rail>
            </Middle>

            <Taskbar>
                <TaskButton $w={48} aria-label="开始">
                    <svg width="16" height="16" viewBox="0 0 16 16" fill="#fff">
                        <path d="M0 2.200 6.500 1.300V7.600H0zM7.500 1.100 16 0V7.600H7.500zM0 8.500H6.500V14.800L0 13.900zM7.500 8.500H16V16L7.500 14.900z" />
                    </svg>
                </TaskButton>
                <TaskButton $w={48} $gap={3} aria-label="任务视图"><TaskViewIcon /></TaskButton>
                <TaskButton $w={48} $gap={5} $open $active aria-label="Edge"><EdgeIcon /></TaskButton>
                <TaskButton $gap={9} $open aria-label="文件资源管理器"><FolderIcon /></TaskButton>
                <TaskButton $gap={9} aria-label="Firefox"><FirefoxIcon /></TaskButton>
                <TaskButton $gap={9} $open aria-label="LaserMaker"><LaserIcon /></TaskButton>
                <TaskButton $open aria-label="掌机"><ConsoleIcon /></TaskButton>
                <Tray>
                    <TrayItem><ChevronUp size={18} strokeWidth={1.5} /></TrayItem>
                    <TrayItem><Monitor size={17} strokeWidth={1.5} /></TrayItem>
                    <TrayItem><SoundIcon /></TrayItem>
                    <TrayItem>中</TrayItem>
                    <TrayItem $w={30}><SogouIcon /></TrayItem>
                    <Clock>12:09<br />2024/5/29</Clock>
                    <TrayItem $w={28}><NoticeIcon /></TrayItem>
                    <ShowDesktop />
                </Tray>
            </Taskbar>
        </Shell>
    )
}

export default App
